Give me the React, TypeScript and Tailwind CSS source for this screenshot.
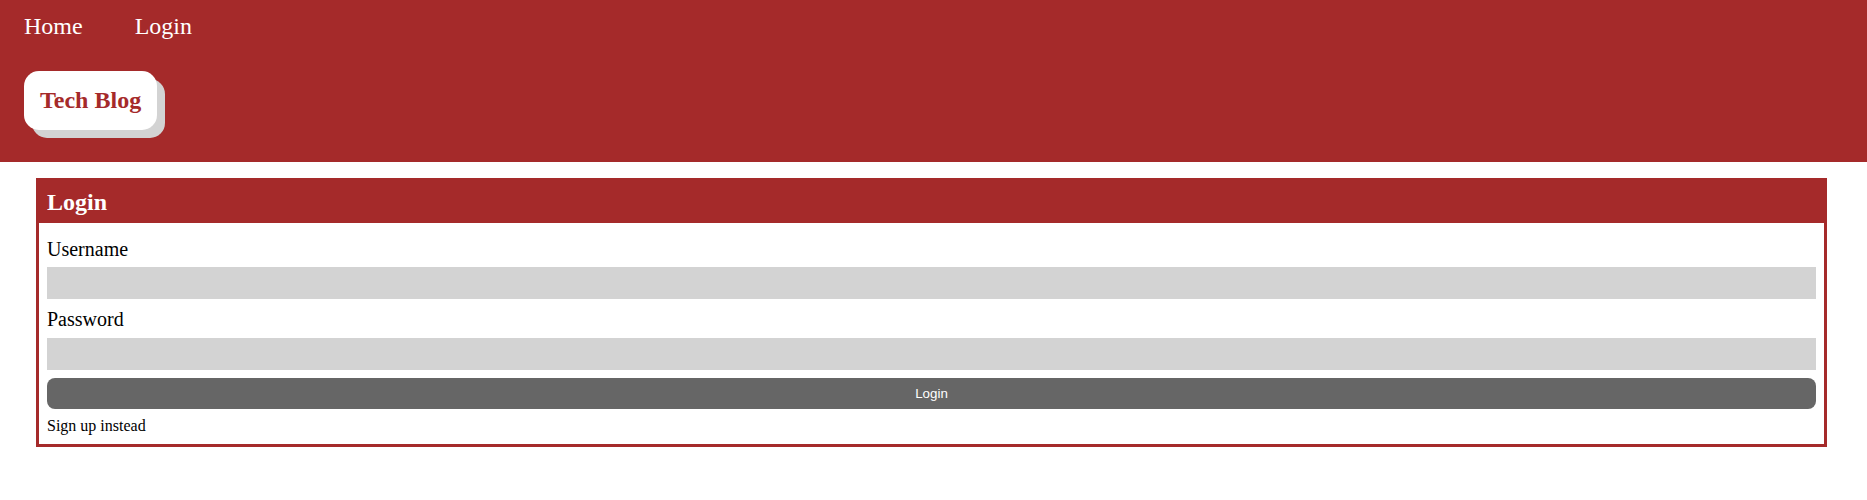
export default function App() {
  return (
    <div className="min-h-screen bg-white font-['Liberation_Serif','Times_New_Roman',serif] text-black">
      {/* top header */}
      <header className="bg-[#a52a2a] pl-[24px] pt-[12px] pb-[32px]">
        <nav className="flex gap-[52px] text-[24px] leading-[28px] text-white">
          <a href="#">Home</a>
          <a href="#">Login</a>
        </nav>
        <div className="mt-[31px] inline-block rounded-[15px] bg-white px-[16px] py-[16px] shadow-[8px_8px_0_0_#d3d3d3]">
          <h1 className="text-[24px] font-bold leading-[27px] text-[#a52a2a]">Tech Blog</h1>
        </div>
      </header>

      {/* login card */}
      <section className="ml-[36px] mr-[40px] mt-[16px] border-[3px] border-[#a52a2a]">
        <div className="flex h-[42px] items-center bg-[#a52a2a] px-[8px]">
          <h2 className="text-[24px] font-bold leading-[27px] text-white">Login</h2>
        </div>
        <form className="flex flex-col px-[8px] pt-[15px] pb-[9px]" onSubmit={(e) => e.preventDefault()}>
          <label className="text-[20px] leading-[23px]">Username</label>
          <input type="text" className="mt-[6px] h-[32px] bg-[#d3d3d3] outline-none" />
          <label className="mt-[9px] text-[20px] leading-[23px]">Password</label>
          <input type="password" className="mt-[7px] h-[32px] bg-[#d3d3d3] outline-none" />
          <button
            type="submit"
            className="mt-[8px] h-[31px] rounded-[8px] bg-[#666666] font-['Liberation_Sans',Arial,sans-serif] text-[13.33px] text-white">
            Login
          </button>
          <a href="#" className="mt-[8px] text-[16px] leading-[18px]">
            Sign up instead
          </a>
        </form>
      </section>
    </div>
  );
}
